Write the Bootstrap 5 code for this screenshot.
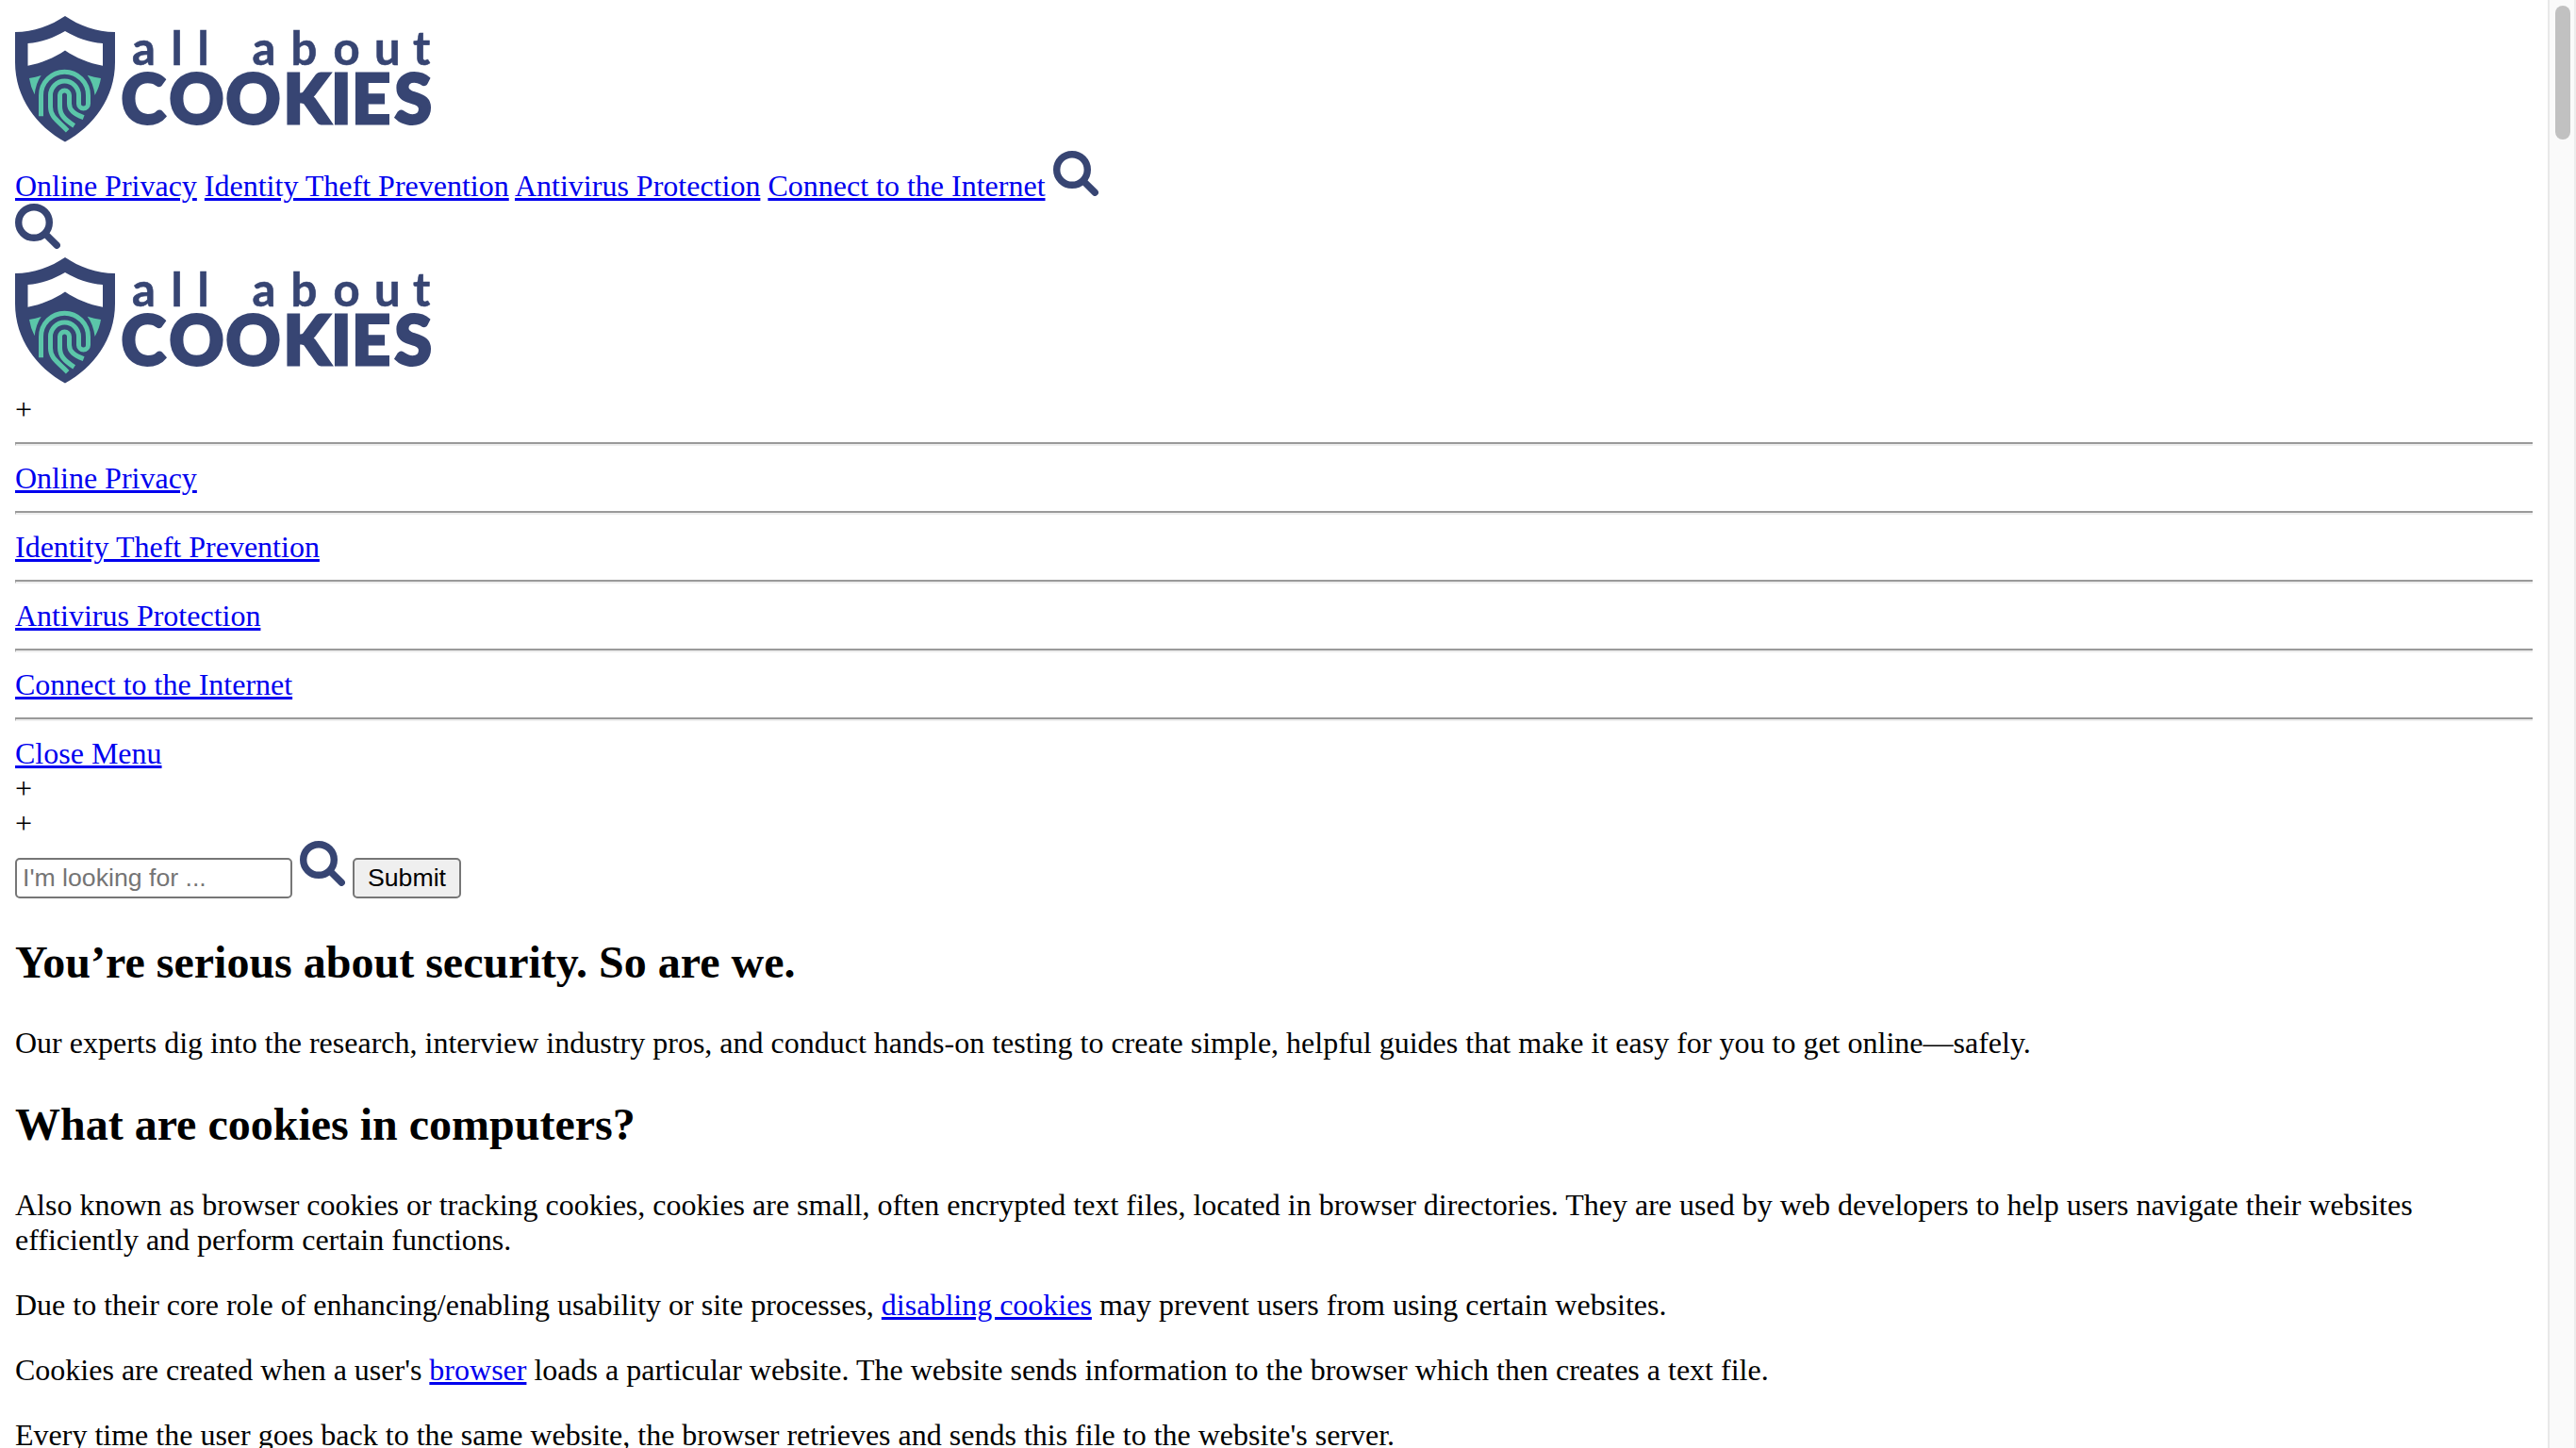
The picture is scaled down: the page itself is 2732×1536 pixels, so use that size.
<!DOCTYPE html>
<html lang="en">
<head>
<meta charset="utf-8">
<title>All About Cookies</title>
<link href="https://cdn.jsdelivr.net/npm/bootstrap@5.3.0/dist/css/bootstrap.min.css" rel="stylesheet">
<script src="https://cdn.jsdelivr.net/npm/bootstrap@5.3.0/dist/js/bootstrap.bundle.min.js"></script>
<style>
body{font-family:"Liberation Serif",serif;font-size:32px;line-height:37px;color:#000;background:#fff}
.page-body{padding:16px;min-width:0}
a{color:#00e;text-decoration-thickness:3px;text-underline-offset:2px}
a:hover{color:#00e}
hr{margin:16px 0;height:4px;opacity:1;border:0;border-top:2px solid #9a9a9a;border-bottom:2px solid #eee;border-left:1px solid #9a9a9a}
h2{font-size:48px;line-height:55px;font-weight:700;margin:40px 0}
p{margin:0 0 32px}
.logo-row{height:144px}
.site-logo{width:450px;height:136px}
.glass{width:48px;height:48px}
.search-row{height:61px}
.search-field,.search-btn{font-family:"Liberation Sans",sans-serif;font-size:26.67px;line-height:31px;height:43px;border:2px solid #767676;border-radius:5px;color:#000}
.search-field{width:294px;padding:4px 6px}
.search-field::placeholder{color:#757575;opacity:1}
.search-btn{width:115px;padding:4px 0;background:#efefef}
.scroll-track{width:30px;background:#fafafa;border-left:2px solid #e8e8e8;border-right:2px solid #ececec;padding:6px 4px 0 6px}
.scroll-thumb{width:16px;height:142px;border-radius:8px;background:#c1c1c1}
</style>
</head>
<body class="d-flex vh-100 overflow-hidden">
<svg class="d-none">
<symbol id="logo" viewBox="16 16 450 136">
<path fill="#374573" d="M69 17C84 27 102 34 122 34V66C122 104 99 134 69 150.500C39 134 16 104 16 66V34C36 34 54 27 69 17Z"/>
<path fill="#fff" d="M69 33C81 40 94 45 109 46V69.700C94 67 81 61.500 69 53.500C57 61.500 44 67 29.500 69.700V46C44 45 57 40 69 33Z"/>
<clipPath id="tip"><path d="M90 200H320V280L290 335L262 368L207 408L153 357L140 348L122 323L90 270Z"/></clipPath>
<g transform="scale(.33333)">
<path fill="#5bc6a9" d="M93 249Q113 246 131 240Q114 265 110 301Q97 275 93 249ZM321 249Q300 246 278 239Q296 262 302 303Q317 275 321 249Z"/>
<g fill="none" stroke="#5bc6a9" stroke-width="15" clip-path="url(#tip)">
<path d="M130.500 370V303.500A75 75 0 0 1 280.500 303.500V330A15 15 0 0 1 250.500 330V303A45 45 0 0 0 160.500 303V340C160.500 372 183 383 215 416"/>
<path d="M236 400C205 380 190.500 365 190.500 338V303A15 15 0 0 1 220.500 303V330C220.500 350 235 362 266 374"/>
</g>
</g>
<g fill="#374573" stroke="#374573" font-family="Lato,sans-serif">
<text y="68.500" font-size="49" stroke-width=".6" font-weight="700" x="140 181.500 209.500 267.500 308.500 353.500 397 438">allabout</text>
<text y="130.700" font-size="71.500" stroke-width="3" font-weight="900" x="128.500 179.500 239.500 300.500 351 373 418.500">COOKIES</text>
</g>
</symbol>
<symbol id="glass" viewBox="0 0 48 48"><g fill="none" stroke="#374573"><circle cx="20" cy="20" r="16.300" stroke-width="7.400"/><path stroke-width="7.400" stroke-linecap="round" d="M33 33L44.200 44.200"/></g></symbol>
</svg>

<main class="page-body flex-grow-1">
<div class="logo-row"><svg class="site-logo d-block"><use href="#logo"/></svg></div>
<nav><a href="#">Online Privacy</a> <a href="#">Identity Theft Prevention</a> <a href="#">Antivirus Protection</a> <a href="#">Connect to the Internet</a> <svg class="glass align-baseline"><use href="#glass"/></svg></nav>
<div><svg class="glass align-baseline"><use href="#glass"/></svg></div>
<div class="logo-row"><svg class="site-logo d-block"><use href="#logo"/></svg></div>
<div>+</div>
<hr>
<div><a href="#">Online Privacy</a></div>
<hr>
<div><a href="#">Identity Theft Prevention</a></div>
<hr>
<div><a href="#">Antivirus Protection</a></div>
<hr>
<div><a href="#">Connect to the Internet</a></div>
<hr>
<div><a href="#">Close Menu</a></div>
<div>+</div>
<div>+</div>
<form class="search-row d-flex align-items-start gap-2"><input class="search-field mt-auto" type="text" placeholder="I'm looking for ..."><svg class="glass"><use href="#glass"/></svg><button class="search-btn mt-auto" type="button">Submit</button></form>
<h2>You’re serious about security. So are we.</h2>
<p>Our experts dig into the research, interview industry pros, and conduct hands-on testing to create simple, helpful guides that make it easy for you to get online—safely.</p>
<h2>What are cookies in computers?</h2>
<p>Also known as browser cookies or tracking cookies, cookies are small, often encrypted text files, located in browser directories. They are used by web developers to help users navigate their websites efficiently and perform certain functions.</p>
<p>Due to their core role of enhancing/enabling usability or site processes, <a href="#">disabling cookies</a> may prevent users from using certain websites.</p>
<p>Cookies are created when a user's <a href="#">browser</a> loads a particular website. The website sends information to the browser which then creates a text file.</p>
<p>Every time the user goes back to the same website, the browser retrieves and sends this file to the website's server.</p>
</main>
<aside class="scroll-track flex-shrink-0"><div class="scroll-thumb"></div></aside>
</body>
</html>
